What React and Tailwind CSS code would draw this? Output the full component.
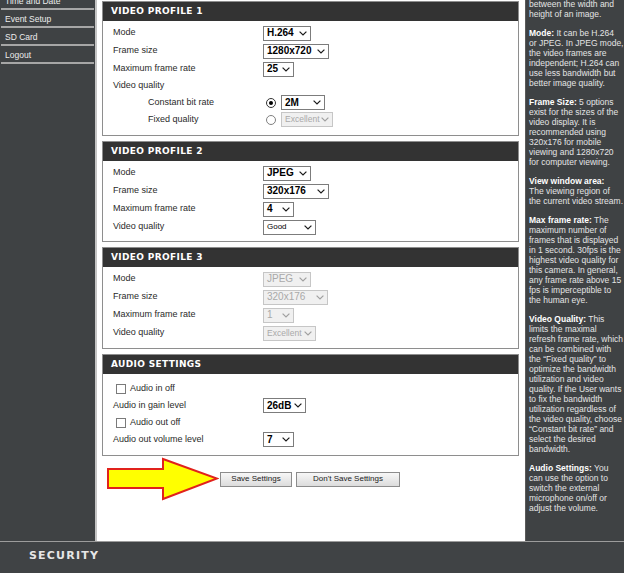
import React from "react";

const SANS = { fontFamily: '"Liberation Sans", Arial, sans-serif' };

function Chevron({ disabled }) {
  return (
    <svg width="8" height="5" viewBox="0 0 8 5" className="ml-auto shrink-0">
      <path d="M0.6 0.6 L4 4 L7.4 0.6" fill="none" stroke={disabled ? "#a0a0a0" : "#1a1a1a"} strokeWidth="1.2" />
    </svg>
  );
}

function Sel({ w, text, bold = true, disabled = false, size = "text-[10px]" }) {
  const tone = disabled
    ? "border-[#c6c6c6] bg-[#f0f0f0] text-[#a9a9a9]"
    : "border-[#7c7c7c] bg-white text-black";
  return (
    <div className={`flex h-[15px] items-center border pl-[3px] pr-[3px] leading-none ${tone} ${w}`}>
      <span className={`${size} ${bold ? "font-bold" : "font-normal"} whitespace-nowrap`}>{text}</span>
      <Chevron disabled={disabled} />
    </div>
  );
}

function Radio({ checked }) {
  return (
    <div className={`flex h-[10px] w-[10px] items-center justify-center rounded-full border bg-white ${checked ? "border-[#333]" : "border-[#808080]"}`}>
      {checked && <div className="h-[4px] w-[4px] rounded-full bg-black" />}
    </div>
  );
}

function Check() {
  return <div className="h-[10px] w-[10px] border border-[#7a7a7a] bg-white" />;
}

function Row({ label, h = "h-[18px]", indent = "pl-[10px]", children }) {
  return (
    <div className={`flex items-center ${h}`}>
      <div className={`w-[160px] shrink-0 ${indent} whitespace-nowrap`}>{label}</div>
      <div className="flex items-center">{children}</div>
    </div>
  );
}

function Box({ title, pt = "pt-[3px]", pb = "pb-[6px]", children }) {
  return (
    <div className="mb-[5px] border border-[#8e8e8e] bg-white">
      <div
        className="flex h-[19px] items-center bg-[#333333] pl-[8px] text-[9px] font-bold tracking-[0.35px] text-white"
        style={{ fontFamily: '"DejaVu Sans", Verdana, sans-serif' }}
      >
        {title}
      </div>
      <div className={`${pt} ${pb} text-[9px] text-[#2a2a2a]`}>{children}</div>
    </div>
  );
}

const help = [
  [[null, "between the width and"], [null, "height of an image."]],
  [["Mode:", " It can be H.264"], [null, "or JPEG. In JPEG mode,"], [null, "the video frames are"], [null, "independent; H.264 can"], [null, "use less bandwidth but"], [null, "better image quality."]],
  [["Frame Size:", " 5 options"], [null, "exist for the sizes of the"], [null, "video display. It is"], [null, "recommended using"], [null, "320x176 for mobile"], [null, "viewing and 1280x720"], [null, "for computer viewing."]],
  [["View window area:", ""], [null, "The viewing region of"], [null, "the current video stream."]],
  [["Max frame rate:", " The"], [null, "maximum number of"], [null, "frames that is displayed"], [null, "in 1 second. 30fps is the"], [null, "highest video quality for"], [null, "this camera. In general,"], [null, "any frame rate above 15"], [null, "fps is imperceptible to"], [null, "the human eye."]],
  [["Video Quality:", " This"], [null, "limits the maximal"], [null, "refresh frame rate, which"], [null, "can be combined with"], [null, "the \u201cFixed quality\u201d to"], [null, "optimize the bandwidth"], [null, "utilization and video"], [null, "quality. If the User wants"], [null, "to fix the bandwidth"], [null, "utilization regardless of"], [null, "the video quality, choose"], [null, "\u201cConstant bit rate\u201d and"], [null, "select the desired"], [null, "bandwidth."]],
  [["Audio Settings:", " You"], [null, "can use the option to"], [null, "switch the external"], [null, "microphone on/off or"], [null, "adjust the volume."]],
];

export default function App() {
  return (
    <div className="flex h-[573px] w-[624px] flex-col overflow-hidden bg-white" style={SANS}>
      <div className="flex h-[541px] shrink-0">
        {/* Sidebar */}
        <div className="w-[97px] shrink-0 overflow-hidden border-r-2 border-[#c4c4c4] bg-[#3f4244] text-[8.5px] text-[#ececec]">
          <div className="mt-[-8px]">
            {["Time and Date", "Event Setup", "SD Card", "Logout"].map((t) => (
              <div key={t}>
                <div className="flex h-[16px] items-center pl-[5px] pt-[2px]">{t}</div>
                <div className="mx-[1px] h-[2px] bg-[#a6a6a6]" />
              </div>
            ))}
          </div>
        </div>

        {/* Main content */}
        <div className="w-[428px] shrink-0 overflow-hidden bg-white pl-[5px] pr-[6px] pt-[1px]">
          <Box title="VIDEO PROFILE 1" pb="pb-[7px]">
            <Row label="Mode"><Sel w="w-[48px]" text="H.264" /></Row>
            <Row label="Frame size"><Sel w="w-[66px]" text="1280x720" /></Row>
            <Row label="Maximum frame rate"><Sel w="w-[31px]" text="25" /></Row>
            <Row label="Video quality" h="h-[16px]" />
            <Row label="Constant bit rate" h="h-[17px]" indent="pl-[45px]">
              <div className="ml-[3px] mr-[5px]"><Radio checked /></div>
              <Sel w="w-[44px]" text="2M" />
            </Row>
            <Row label="Fixed quality" h="h-[17px]" indent="pl-[45px]">
              <div className="ml-[3px] mr-[5px]"><Radio /></div>
              <Sel w="w-[52px]" text="Excellent" bold={false} disabled size="text-[8.5px]" />
            </Row>
          </Box>

          <Box title="VIDEO PROFILE 2" pb="pb-[5px]">
            <Row label="Mode"><Sel w="w-[48px]" text="JPEG" /></Row>
            <Row label="Frame size"><Sel w="w-[66px]" text="320x176" /></Row>
            <Row label="Maximum frame rate"><Sel w="w-[31px]" text="4" /></Row>
            <Row label="Video quality"><Sel w="w-[53px]" text="Good" bold={false} size="text-[8px]" /></Row>
          </Box>

          <Box title="VIDEO PROFILE 3" pb="pb-[6px]">
            <Row label="Mode"><Sel w="w-[48px]" text="JPEG" bold={false} disabled /></Row>
            <Row label="Frame size"><Sel w="w-[65px]" text="320x176" bold={false} disabled /></Row>
            <Row label="Maximum frame rate"><Sel w="w-[31px]" text="1" bold={false} disabled /></Row>
            <Row label="Video quality"><Sel w="w-[53px]" text="Excellent" bold={false} disabled size="text-[8.5px]" /></Row>
          </Box>

          <Box title="AUDIO SETTINGS" pt="pt-[6px]" pb="pb-[7px]">
            <div className="flex h-[17px] items-center gap-[4px] pl-[13px]">
              <Check />
              <span>Audio in off</span>
            </div>
            <Row label="Audio in gain level" h="h-[17px]"><Sel w="w-[43px]" text="26dB" /></Row>
            <div className="flex h-[17px] items-center gap-[4px] pl-[13px]">
              <Check />
              <span>Audio out off</span>
            </div>
            <Row label="Audio out volume level" h="h-[17px]"><Sel w="w-[31px]" text="7" /></Row>
          </Box>

          <div className="mt-[-4px] flex items-center pl-[5px]">
            <svg width="112" height="44" viewBox="0 0 112 44" className="shrink-0">
              <polygon
                points="1,12 56,12 56,2 110,21.5 56,42 56,31 1,31"
                fill="#ffff00"
                stroke="#e1221c"
                strokeWidth="2"
                strokeLinejoin="miter"
              />
            </svg>
            <div className="ml-[1px] flex gap-[4px]">
              <button className="flex h-[15px] w-[72px] items-center justify-center border border-[#8c8c8c] bg-gradient-to-b from-[#f7f7f7] to-[#dcdcdc] text-[8px] leading-none text-[#222]">
                Save Settings
              </button>
              <button className="flex h-[15px] w-[104px] items-center justify-center border border-[#8c8c8c] bg-gradient-to-b from-[#f7f7f7] to-[#dcdcdc] text-[8px] leading-none text-[#222]">
                Don&#39;t Save Settings
              </button>
            </div>
          </div>
        </div>

        {/* Help panel */}
        <div className="w-[99px] shrink-0 overflow-hidden border-l border-[#5a5a5a] bg-[#3f4244] pl-[3px] text-[8.5px] leading-[10px] text-[#e4e4e4]">
          <div className="mt-[-1px] flex flex-col gap-[9px]">
            {help.map((p, i) => (
              <div key={i}>
                {p.map(([b, t], j) => (
                  <div key={j} className="whitespace-nowrap">
                    {b && <span className="font-bold text-white">{b}</span>}
                    {t}
                  </div>
                ))}
              </div>
            ))}
          </div>
        </div>
      </div>

      {/* Footer */}
      <div className="flex flex-1 items-start border-t border-[#9c9c9c] bg-[#404345] pl-[29px] pt-[8px]">
        <span
          className="text-[11px] font-bold leading-none tracking-[1.2px] text-[#e6e6e6]"
          style={{ fontFamily: '"DejaVu Sans", Verdana, sans-serif' }}
        >
          SECURITY
        </span>
      </div>
    </div>
  );
}
